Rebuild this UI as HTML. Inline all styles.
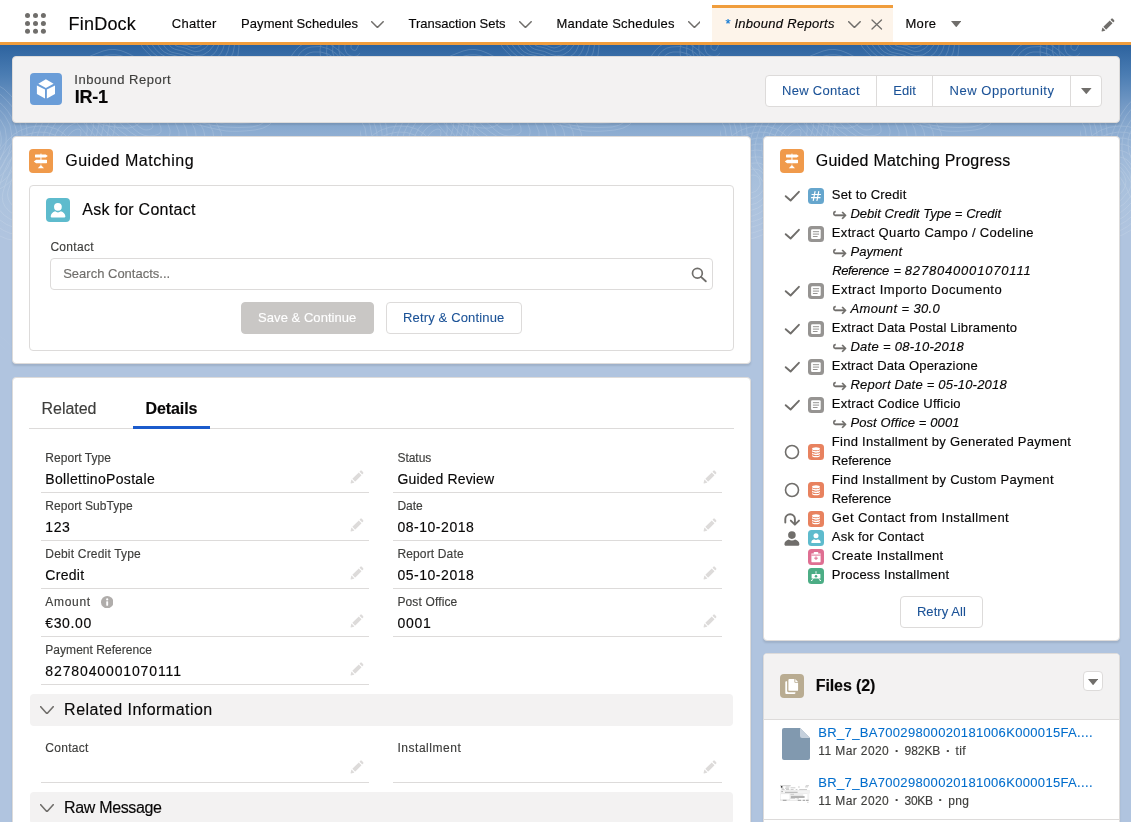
<!DOCTYPE html>
<html lang="en">
<head>
<meta charset="utf-8">
<title>IR-1 | Inbound Report | Salesforce</title>
<style>

html,body{margin:0;padding:0}
body{width:1131px;height:822px;overflow:hidden;position:relative;background:#b0c4df;
 font-family:"Liberation Sans",sans-serif;font-size:13px;color:#080707}
#root{position:absolute;left:0;top:0;width:1131px;height:822px;will-change:transform}
.t{position:absolute;white-space:nowrap;line-height:1;-webkit-text-stroke:.15px}
.ns{-webkit-text-stroke:.08px}
.abs,.card,svg.i,.btn,.ico,.ln{position:absolute}
#band{left:0;top:45px;width:1131px;height:200px;background:linear-gradient(to bottom,#2d639f 0px,#4b7db3 30px,#7399c5 60px,#87a8ce 80px,#93b1d4 95px,#a0bad9 115px,#a8c0dc 138px,#adc3de 162px,#b0c4df 190px)}
#nav{left:0;top:0;width:1131px;height:42px;background:#fff;border-bottom:3px solid #f09d3c}
#tab{left:712px;top:5px;width:181px;height:37px;background:#fdf4ea;border-top:3px solid #f09d3c;box-sizing:border-box}
.card{background:#fff;border:1px solid #dddbda;border-radius:4px;box-shadow:0 2px 2px 0 rgba(0,0,0,.10);box-sizing:border-box}
.btn{box-sizing:border-box;border:1px solid #dddbda;border-radius:4px;background:#fff}
.ico{border-radius:4px}
.ico svg{display:block}
.ln{height:1px;background:#dddbda}
.sec{position:absolute;left:30px;width:703px;height:32px;background:#f3f2f2;border-radius:4px}

</style>
</head>
<body>
<div id="root">
<div class="abs" id="band"></div>
<svg class="i" style="left:0;top:45px" width="1131" height="330" viewBox="0 0 1131 330"><defs><pattern id="topo" width="360" height="250" patternUnits="userSpaceOnUse"><g fill="none" stroke="#fff" stroke-width=".8"><path d="M-19 102Q-21 103 -23 102Q-25 101 -25 99Q-26 97 -25 96Q-24 94 -24 93Q-23 91 -21 90Q-19 89 -17 90Q-15 92 -15 94Q-15 95 -15 97Q-15 99 -16 100Q-17 101 -19 102Z"/><path d="M-18 108Q-22 109 -26 108Q-30 106 -31 102Q-31 98 -30 95Q-29 93 -27 89Q-26 86 -22 84Q-18 82 -15 85Q-11 87 -10 91Q-9 94 -10 98Q-10 101 -12 104Q-14 106 -18 108Z"/><path d="M-16 113Q-22 115 -29 113Q-35 111 -36 105Q-37 99 -35 95Q-33 91 -31 86Q-29 82 -23 78Q-17 75 -12 79Q-7 83 -5 88Q-4 94 -5 98Q-5 103 -8 107Q-11 112 -16 113Z"/><path d="M-15 119Q-23 121 -31 119Q-40 116 -41 108Q-42 100 -40 94Q-38 88 -35 83Q-32 77 -24 72Q-16 67 -9 73Q-2 79 -0 86Q2 93 1 99Q-1 105 -4 111Q-7 117 -15 119Z"/><path d="M-14 125Q-24 127 -34 124Q-45 121 -46 111Q-47 101 -45 94Q-43 86 -39 79Q-35 72 -25 66Q-16 60 -7 67Q2 75 5 83Q7 92 6 99Q4 107 -0 115Q-4 122 -14 125Z"/><path d="M-13 130Q-24 133 -37 130Q-50 127 -51 114Q-53 102 -50 93Q-47 84 -42 76Q-37 68 -26 60Q-15 52 -4 61Q6 70 10 80Q13 91 11 100Q9 109 4 118Q-1 128 -13 130Z"/><path d="M-11 136Q-25 139 -40 135Q-55 132 -57 117Q-58 103 -55 93Q-52 82 -46 73Q-40 63 -27 54Q-14 45 -2 56Q10 66 14 78Q19 90 16 100Q13 111 8 122Q2 133 -11 136Z"/><path d="M-10 142Q-26 145 -43 141Q-60 137 -62 120Q-64 104 -60 92Q-56 80 -50 69Q-43 58 -28 48Q-13 38 1 50Q15 62 19 75Q24 89 21 101Q18 113 12 126Q5 138 -10 142Z"/><path d="M-9 147Q-27 151 -46 146Q-65 141 -67 123Q-69 105 -65 92Q-60 79 -53 66Q-46 53 -29 42Q-12 31 4 44Q19 57 24 72Q29 88 26 102Q23 115 16 129Q8 143 -9 147Z"/><path d="M40 137Q41 140 39 142Q38 144 36 146Q34 147 31 148Q28 149 26 146Q24 144 24 141Q25 138 26 136Q27 134 28 132Q30 130 33 130Q36 130 38 132Q40 134 40 137Z"/><path d="M46 136Q46 140 44 144Q42 147 39 150Q35 153 30 154Q25 155 21 151Q18 148 19 143Q20 138 21 134Q23 131 26 127Q29 124 34 124Q39 124 42 127Q45 131 46 136Z"/><path d="M51 135Q52 141 49 146Q45 150 41 155Q37 159 30 160Q23 161 17 156Q12 151 13 144Q15 137 17 133Q19 128 23 123Q27 118 35 118Q42 117 46 123Q51 128 51 135Z"/><path d="M57 134Q58 142 53 148Q49 154 44 159Q38 164 29 166Q20 167 13 161Q6 154 8 146Q11 137 13 131Q15 124 21 118Q26 112 35 112Q45 111 50 118Q56 126 57 134Z"/><path d="M62 132Q64 142 58 149Q53 157 46 163Q39 170 28 172Q17 173 9 166Q-0 158 3 147Q6 137 9 129Q11 121 18 114Q25 106 36 105Q47 105 54 114Q61 123 62 132Z"/><path d="M68 131Q69 143 63 151Q56 160 48 168Q41 176 28 177Q15 179 4 170Q-6 161 -3 149Q1 136 4 127Q7 117 15 109Q23 101 37 99Q50 98 58 109Q66 120 68 131Z"/><path d="M73 130Q75 143 67 153Q60 163 51 172Q42 181 27 183Q12 185 -0 175Q-12 165 -8 150Q-4 136 -0 125Q4 114 13 104Q22 95 38 93Q53 92 62 104Q71 117 73 130Z"/><path d="M78 129Q80 144 72 155Q64 166 53 177Q43 187 26 189Q9 192 -4 180Q-18 168 -13 152Q-9 135 -4 123Q-0 111 10 100Q21 89 38 87Q56 86 66 100Q76 114 78 129Z"/><path d="M84 127Q86 144 77 157Q68 170 56 181Q44 192 25 195Q6 198 -9 185Q-23 171 -19 153Q-14 135 -9 121Q-4 108 8 95Q19 82 39 81Q58 80 70 95Q82 110 84 127Z"/><path d="M70 103Q68 101 68 99Q67 97 67 95Q66 92 69 90Q71 87 73 86Q76 84 78 84Q81 84 81 87Q81 90 80 92Q79 94 78 98Q77 101 74 103Q71 104 70 103Z"/><path d="M67 111Q64 107 62 104Q61 100 60 96Q60 91 64 86Q68 81 73 79Q78 77 82 76Q87 76 87 81Q88 86 86 91Q84 95 82 101Q80 107 75 111Q69 114 67 111Z"/><path d="M63 119Q59 113 57 108Q54 104 54 97Q54 90 59 83Q65 75 72 72Q79 69 86 68Q94 68 94 75Q94 83 91 90Q89 96 86 105Q83 113 75 119Q67 125 63 119Z"/><path d="M60 127Q55 118 51 113Q48 107 48 98Q48 89 55 79Q62 69 71 66Q81 62 91 61Q100 59 100 69Q99 80 97 89Q94 97 90 108Q86 118 75 127Q65 135 60 127Z"/><path d="M57 135Q51 123 46 117Q41 111 42 99Q42 88 51 75Q59 63 71 59Q82 55 95 53Q107 50 106 63Q105 77 102 88Q100 98 94 111Q89 124 76 135Q62 146 57 135Z"/><path d="M54 143Q47 129 40 122Q34 115 35 101Q37 87 46 71Q56 56 70 52Q84 49 99 45Q114 41 112 58Q111 74 108 87Q106 99 98 114Q91 129 76 143Q60 157 54 143Z"/><path d="M50 151Q43 134 35 126Q27 118 29 102Q31 86 42 68Q53 50 69 46Q85 42 103 37Q121 32 119 52Q116 71 114 86Q111 100 102 118Q94 135 76 151Q58 167 50 151Z"/><path d="M108 46Q107 45 107 44Q108 42 109 41Q110 40 111 40Q112 40 113 41Q115 41 115 42Q116 43 116 44Q116 46 115 47Q114 47 113 48Q111 48 110 47Q109 47 108 46Z"/><path d="M104 48Q101 47 102 43Q102 40 104 38Q107 36 110 36Q112 36 115 36Q118 36 120 39Q121 42 121 45Q122 48 119 50Q117 52 114 53Q111 53 109 52Q106 50 104 48Z"/><path d="M99 51Q95 48 96 43Q97 38 100 34Q104 31 108 31Q113 31 117 31Q122 32 124 36Q126 41 127 46Q127 51 123 54Q120 57 115 58Q111 59 107 56Q103 54 99 51Z"/><path d="M94 54Q89 49 90 42Q91 35 96 31Q101 27 107 26Q113 25 119 27Q126 28 129 33Q132 39 132 46Q133 53 128 58Q123 62 116 63Q110 64 105 61Q100 58 94 54Z"/><path d="M90 56Q84 51 84 42Q85 33 92 27Q99 22 106 21Q114 20 121 22Q129 24 134 31Q138 38 138 46Q138 55 132 61Q126 68 118 68Q110 68 103 65Q96 62 90 56Z"/><path d="M85 59Q78 52 78 41Q78 30 87 24Q96 18 105 16Q114 14 123 17Q132 20 138 28Q144 36 143 47Q143 57 136 65Q129 73 119 73Q109 73 101 70Q93 66 85 59Z"/><path d="M81 62Q73 53 72 40Q72 27 83 21Q94 14 104 11Q115 8 125 12Q136 16 143 26Q150 35 149 47Q147 59 140 69Q133 79 121 78Q109 77 99 74Q89 71 81 62Z"/><path d="M76 65Q68 54 67 39Q66 24 79 17Q91 10 103 6Q115 2 127 8Q139 13 148 23Q157 33 154 47Q152 61 144 73Q136 85 122 83Q109 82 97 78Q85 75 76 65Z"/><path d="M153 81Q153 83 151 84Q149 85 146 85Q143 85 141 83Q139 82 137 80Q134 78 134 76Q133 74 135 72Q136 71 140 72Q143 73 145 74Q148 74 150 76Q152 78 153 81Z"/><path d="M161 83Q162 87 159 89Q155 91 149 91Q144 91 139 88Q135 85 131 81Q126 78 125 74Q123 69 127 67Q130 64 136 66Q142 68 147 69Q152 71 156 75Q160 78 161 83Z"/><path d="M170 85Q171 91 166 94Q161 98 152 97Q144 97 138 92Q131 88 125 83Q118 78 116 71Q113 65 119 61Q125 58 133 60Q142 62 149 65Q157 68 163 73Q169 78 170 85Z"/><path d="M179 87Q180 95 173 100Q167 105 156 104Q145 102 136 97Q127 91 119 85Q111 78 107 69Q103 60 111 56Q119 51 130 54Q142 57 151 61Q161 65 169 71Q177 78 179 87Z"/><path d="M187 89Q189 99 181 105Q173 111 159 110Q145 108 134 101Q122 94 113 86Q104 78 98 67Q93 56 103 50Q113 45 127 48Q141 51 153 56Q165 61 175 70Q186 78 187 89Z"/><path d="M196 90Q197 103 188 111Q179 119 162 116Q145 113 132 106Q118 98 107 88Q96 78 89 64Q82 51 95 45Q108 39 124 42Q141 45 155 52Q169 58 182 68Q195 78 196 90Z"/><path d="M205 92Q205 106 195 116Q185 126 166 122Q146 119 129 110Q113 101 101 90Q89 78 81 62Q72 46 87 39Q103 33 122 36Q141 40 156 47Q172 55 188 67Q204 78 205 92Z"/><path d="M214 94Q214 110 203 121Q192 133 169 128Q146 124 127 114Q109 105 96 92Q82 78 72 60Q61 41 79 34Q97 27 119 30Q140 34 158 43Q176 52 195 65Q214 78 214 94Z"/><path d="M222 96Q222 114 210 127Q198 140 172 135Q146 129 125 119Q104 108 90 93Q75 78 63 57Q51 37 71 29Q92 21 116 24Q140 28 160 39Q180 49 201 64Q223 79 222 96Z"/><path d="M195 -1Q193 -0 191 -2Q189 -3 186 -3Q184 -3 183 -6Q181 -8 183 -10Q184 -13 186 -13Q189 -13 191 -14Q194 -14 195 -12Q197 -11 198 -9Q200 -7 199 -5Q198 -2 195 -1Z"/><path d="M198 2Q194 4 190 2Q187 -0 183 -0Q180 -1 178 -4Q176 -8 178 -12Q179 -16 184 -16Q188 -17 192 -17Q195 -17 198 -15Q200 -13 203 -10Q206 -7 204 -3Q202 1 198 2Z"/><path d="M200 6Q195 8 190 5Q186 3 181 2Q175 2 173 -3Q170 -8 173 -14Q175 -19 181 -20Q187 -21 192 -21Q197 -21 200 -18Q204 -15 208 -11Q211 -7 209 -1Q206 4 200 6Z"/><path d="M203 10Q196 12 190 9Q185 6 178 5Q171 4 168 -2Q165 -8 168 -15Q171 -22 179 -23Q186 -24 193 -25Q199 -25 203 -21Q208 -17 212 -12Q217 -6 214 0Q210 7 203 10Z"/><path d="M206 13Q197 16 190 13Q183 9 175 8Q167 7 163 -1Q159 -9 163 -17Q167 -25 176 -27Q185 -28 193 -28Q200 -28 206 -24Q212 -20 217 -13Q222 -6 218 2Q215 11 206 13Z"/><path d="M209 17Q198 20 190 16Q182 12 173 10Q163 9 158 -0Q152 -9 158 -18Q163 -28 174 -30Q184 -32 193 -32Q202 -32 209 -27Q216 -22 221 -14Q227 -6 223 4Q219 14 209 17Z"/><path d="M211 21Q199 24 189 20Q180 16 170 13Q160 11 153 1Q146 -9 153 -20Q160 -31 171 -34Q183 -37 193 -36Q203 -35 212 -30Q220 -25 226 -15Q232 -6 228 6Q224 18 211 21Z"/><path d="M214 24Q200 27 189 23Q179 19 168 16Q156 13 148 2Q139 -9 148 -21Q156 -33 169 -37Q182 -41 193 -39Q205 -38 214 -33Q224 -27 231 -17Q237 -6 233 8Q229 21 214 24Z"/><path d="M217 28Q200 30 189 27Q177 23 165 19Q153 15 143 3Q133 -10 143 -23Q153 -36 167 -41Q181 -46 193 -43Q206 -41 217 -35Q229 -30 235 -18Q241 -6 238 10Q234 25 217 28Z"/><path d="M236 51Q238 54 237 57Q236 60 232 60Q229 61 226 61Q223 60 220 59Q217 59 215 56Q213 53 215 50Q217 48 220 46Q223 45 226 46Q229 46 232 47Q234 49 236 51Z"/><path d="M242 50Q244 54 243 59Q241 63 236 64Q230 65 226 64Q222 64 217 62Q213 61 210 57Q207 53 210 49Q213 45 217 43Q222 41 226 42Q231 43 235 44Q239 46 242 50Z"/><path d="M247 49Q251 54 249 60Q247 67 239 67Q231 68 226 68Q220 67 214 65Q208 64 204 58Q200 53 204 47Q208 42 214 39Q220 37 226 38Q232 39 238 41Q243 44 247 49Z"/><path d="M252 48Q257 54 254 62Q252 70 242 71Q233 72 226 71Q219 71 211 68Q204 66 199 59Q194 52 199 46Q204 39 211 36Q219 32 226 34Q234 36 241 38Q248 41 252 48Z"/><path d="M257 47Q263 55 260 64Q257 73 245 74Q234 76 226 75Q217 74 208 72Q199 69 193 60Q187 52 193 44Q199 36 208 32Q217 28 226 30Q235 32 243 35Q252 39 257 47Z"/><path d="M263 46Q269 55 266 66Q262 77 249 78Q235 79 225 79Q216 78 205 75Q194 71 188 62Q181 52 188 43Q195 33 205 29Q216 24 226 26Q237 29 246 32Q256 36 263 46Z"/><path d="M268 45Q276 55 271 67Q267 80 252 82Q237 83 225 82Q214 81 202 78Q190 74 182 63Q175 52 182 41Q190 30 202 25Q214 20 226 22Q238 25 249 29Q260 34 268 45Z"/><path d="M273 43Q282 55 277 69Q272 83 255 85Q238 87 226 86Q213 84 199 80Q185 77 177 64Q169 52 177 39Q185 27 199 22Q213 16 226 19Q240 21 252 26Q264 32 273 43Z"/><path d="M272 190Q270 190 269 189Q268 188 268 187Q268 186 267 184Q267 182 268 181Q270 180 271 180Q272 181 273 181Q274 182 275 183Q276 184 276 186Q275 188 274 189Q273 190 272 190Z"/><path d="M272 196Q269 196 267 194Q265 192 264 189Q264 186 263 182Q262 178 265 176Q268 174 271 175Q274 175 275 177Q277 179 279 181Q282 184 280 187Q279 190 277 193Q275 196 272 196Z"/><path d="M272 202Q268 201 264 198Q261 196 261 191Q260 187 258 181Q257 175 261 172Q266 169 271 170Q275 170 278 173Q280 176 284 179Q287 183 285 188Q283 193 280 198Q277 202 272 202Z"/><path d="M272 207Q266 206 262 203Q258 199 257 193Q256 187 254 179Q252 171 258 167Q265 164 270 164Q276 165 280 169Q283 173 288 177Q293 182 289 189Q286 196 282 202Q278 208 272 207Z"/><path d="M273 213Q265 211 260 207Q254 203 253 195Q252 188 249 178Q247 168 255 163Q263 158 270 159Q277 160 282 165Q286 169 292 175Q298 181 294 190Q290 199 285 206Q280 214 273 213Z"/><path d="M273 218Q264 217 257 212Q251 206 249 197Q248 189 245 176Q242 164 252 158Q261 152 270 154Q278 155 284 161Q290 166 296 173Q303 180 299 191Q294 201 288 211Q282 220 273 218Z"/><path d="M273 224Q262 223 255 216Q248 209 246 199Q243 189 240 175Q237 161 248 154Q259 146 269 148Q279 151 286 157Q293 162 300 171Q308 180 303 192Q299 204 291 215Q284 225 273 224Z"/><path d="M273 230Q261 229 253 221Q246 212 242 201Q238 190 236 174Q233 158 245 149Q257 140 269 143Q280 147 289 153Q297 159 305 169Q312 179 308 193Q303 208 294 219Q285 230 273 230Z"/><path d="M273 235Q259 236 251 225Q243 215 238 203Q233 191 231 173Q229 155 242 144Q255 133 268 138Q281 143 291 149Q301 154 309 166Q317 178 312 195Q308 211 297 223Q287 235 273 235Z"/><path d="M325 38Q323 38 322 38Q321 37 319 36Q317 36 317 33Q317 31 318 29Q319 27 321 27Q323 27 324 28Q326 28 326 30Q327 31 329 33Q330 35 328 37Q327 38 325 38Z"/><path d="M327 43Q324 43 321 42Q319 41 315 39Q312 38 312 34Q312 30 314 26Q316 23 319 22Q322 22 325 23Q328 24 330 27Q331 29 334 33Q336 37 333 40Q330 43 327 43Z"/><path d="M329 48Q324 48 320 46Q316 45 311 42Q306 40 307 34Q307 28 310 23Q312 18 317 17Q322 17 326 18Q330 20 333 24Q335 28 339 33Q343 39 338 44Q334 48 329 48Z"/><path d="M331 53Q324 53 319 50Q314 48 308 46Q301 43 302 35Q302 27 305 20Q308 13 315 12Q322 11 327 14Q332 16 336 21Q339 26 344 33Q349 41 343 47Q337 53 331 53Z"/><path d="M333 57Q324 57 318 55Q312 52 304 49Q296 45 296 35Q297 25 301 16Q305 8 313 7Q321 6 328 9Q335 12 339 18Q343 24 349 33Q355 43 348 50Q341 58 333 57Z"/><path d="M335 62Q325 61 317 59Q310 56 300 52Q291 47 291 35Q292 23 297 13Q302 3 311 2Q321 -0 329 4Q337 8 342 15Q348 22 354 33Q361 45 353 54Q344 63 335 62Z"/><path d="M337 67Q325 65 316 63Q307 61 297 55Q286 49 286 35Q286 21 292 10Q299 -1 310 -4Q321 -6 330 -1Q339 5 346 12Q352 20 360 33Q367 47 358 58Q348 69 337 67Z"/><path d="M353 5Q352 5 351 3Q351 2 351 1Q351 -0 352 -1Q353 -1 354 -2Q355 -3 357 -3Q358 -3 359 -1Q359 0 358 1Q358 2 357 3Q357 4 356 5Q355 6 353 5Z"/><path d="M351 11Q347 10 346 7Q344 4 345 0Q345 -3 348 -4Q351 -5 353 -7Q355 -9 359 -9Q363 -9 365 -5Q366 -1 364 1Q362 4 361 7Q360 9 357 11Q354 12 351 11Z"/><path d="M349 17Q343 16 340 10Q338 5 339 0Q340 -5 344 -7Q348 -9 352 -12Q356 -16 362 -15Q368 -15 371 -9Q373 -3 369 1Q366 6 365 10Q363 14 359 17Q354 19 349 17Z"/><path d="M346 23Q339 21 335 14Q331 7 333 -0Q334 -7 340 -10Q346 -13 351 -17Q356 -22 365 -22Q374 -21 377 -13Q379 -5 375 1Q370 7 368 13Q366 19 360 22Q354 26 346 23Z"/><path d="M344 30Q334 26 329 17Q325 8 327 -1Q329 -10 336 -13Q343 -17 350 -23Q356 -28 368 -28Q379 -28 382 -17Q386 -6 380 2Q375 9 372 16Q369 23 362 28Q354 33 344 30Z"/><path d="M342 36Q330 31 324 20Q318 10 321 -1Q324 -12 332 -17Q340 -21 348 -28Q356 -34 370 -34Q384 -34 388 -21Q392 -8 386 2Q379 11 376 19Q372 28 363 34Q353 40 342 36Z"/></g></pattern><linearGradient id="fade" x1="0" y1="0" x2="0" y2="1"><stop offset="0" stop-color="#fff" stop-opacity=".2"/><stop offset=".55" stop-color="#fff" stop-opacity=".16"/><stop offset="1" stop-color="#fff" stop-opacity="0"/></linearGradient><mask id="fm"><rect width="1131" height="330" fill="url(#fade)"/></mask></defs><rect width="1131" height="330" fill="url(#topo)" mask="url(#fm)"/></svg>
<div class="abs" id="nav"></div>
<div class="abs" id="tab"></div>
<svg class="i" style="left:25px;top:13px" width="21" height="21" viewBox="0 0 21 21"><g fill="#706e6b"><circle cx="2.5" cy="2.5" r="2.500"/><circle cx="10.5" cy="2.5" r="2.500"/><circle cx="18.4" cy="2.5" r="2.500"/><circle cx="2.5" cy="10.4" r="2.500"/><circle cx="10.5" cy="10.4" r="2.500"/><circle cx="18.4" cy="10.4" r="2.500"/><circle cx="2.5" cy="18.3" r="2.500"/><circle cx="10.5" cy="18.3" r="2.500"/><circle cx="18.4" cy="18.3" r="2.500"/></g></svg>
<span class="t" style="left:68.61px;top:15.30px;font-size:18px;letter-spacing:0.197px;">FinDock</span>
<span class="t" style="left:171.71px;top:17.11px;font-size:13px;letter-spacing:0.327px;">Chatter</span>
<span class="t" style="left:241.00px;top:17.11px;font-size:13px;letter-spacing:0.086px;">Payment Schedules</span>
<svg class="i" style="left:371px;top:21.1px" width="12.9" height="7.2" viewBox="0 0 12.9 7.2"><path d="M.7 .7L6.45 6.5L12.2 .7" fill="none" stroke="#706e6b" stroke-width="1.5" stroke-linecap="round" stroke-linejoin="round"/></svg>
<span class="t" style="left:408.50px;top:17.11px;font-size:13px;">Transaction Sets</span>
<svg class="i" style="left:518.8px;top:21.1px" width="12.9" height="7.2" viewBox="0 0 12.9 7.2"><path d="M.7 .7L6.45 6.5L12.2 .7" fill="none" stroke="#706e6b" stroke-width="1.5" stroke-linecap="round" stroke-linejoin="round"/></svg>
<span class="t" style="left:556.50px;top:17.11px;font-size:13px;letter-spacing:0.192px;">Mandate Schedules</span>
<svg class="i" style="left:687.6px;top:21.1px" width="12.9" height="7.2" viewBox="0 0 12.9 7.2"><path d="M.7 .7L6.45 6.5L12.2 .7" fill="none" stroke="#706e6b" stroke-width="1.5" stroke-linecap="round" stroke-linejoin="round"/></svg>
<span class="t" style="left:725.41px;top:16.50px;font-size:13px;color:#0070d2;">*</span>
<span class="t" style="left:734.41px;top:17.11px;font-size:13px;font-style:italic;letter-spacing:0.277px;">Inbound Reports</span>
<svg class="i" style="left:847.9px;top:21.1px" width="12.9" height="7.2" viewBox="0 0 12.9 7.2"><path d="M.7 .7L6.45 6.5L12.2 .7" fill="none" stroke="#706e6b" stroke-width="1.5" stroke-linecap="round" stroke-linejoin="round"/></svg>
<svg class="i" style="left:871px;top:18.800px" width="11.500" height="11" viewBox="0 0 11.500 11"><path d="M1 1L10.500 10M10.500 1L1 10" stroke="#706e6b" stroke-width="1.300" stroke-linecap="round"/></svg>
<span class="t" style="left:905.50px;top:17.11px;font-size:13px;letter-spacing:0.292px;">More</span>
<svg class="i" style="left:950.5px;top:20.8px" width="10.5" height="6.3" viewBox="0 0 10.5 6.3"><path d="M0 0H10.5L5.25 6.3Z" fill="#706e6b"/></svg>
<svg class="i" style="left:1101px;top:18.2px" width="14" height="14" viewBox="0 0 52 52"><path fill="#706e6b" d="M9.5 33.4l8.9 8.9c.4.4 1 .4 1.4 0L42 20c.4-.4.4-1 0-1.4l-8.8-8.8c-.4-.4-1-.4-1.4 0L9.5 32c-.4.4-.4 1 0 1.400zM36.100 5.700c-.4.4-.4 1 0 1.400l8.800 8.800c.4.4 1 .4 1.400 0l2.500-2.500c1.600-1.500 1.600-3.900 0-5.500l-4.700-4.700c-1.600-1.600-4.100-1.600-5.700 0l-2.300 2.500zM2.100 48.200c-.2 1 .7 1.900 1.700 1.700l10.900-2.600c.4-.1.700-.3.900-.5l.2-.2c.2-.2.300-.9-.1-1.300l-9-9c-.4-.4-1.100-.3-1.300-.1l-.2.200c-.3.300-.4.600-.5.900L2.100 48.200z"/></svg>
<div class="card" style="left:12px;top:56px;width:1108px;height:67px;background:#f3f2f2"></div>
<div class="ico" style="left:30px;top:73px;width:32px;height:32px;background:#6a9dd8"><svg width="32" height="32" viewBox="0 0 32 32"><g fill="#fff"><path d="M15.900 6.200L23.600 10.700 15.900 15.100 8.300 10.700z"/><path d="M6.900 12.400L15 16.500V25.400L6.900 20.900z"/><path d="M25 12.400L16.900 16.500V25.400L25 20.900z"/></g></svg></div>
<span class="t" style="left:74.30px;top:72.91px;font-size:13px;color:#3e3e3c;letter-spacing:0.521px;">Inbound Report</span>
<span class="t" style="left:74.80px;top:87.80px;font-size:18px;font-weight:700;letter-spacing:-0.305px;">IR-1</span>
<div class="btn" style="left:765px;top:75px;width:337px;height:32px"></div>
<div class="abs" style="left:876px;top:76px;width:1px;height:30px;background:#dddbda"></div>
<div class="abs" style="left:932px;top:76px;width:1px;height:30px;background:#dddbda"></div>
<div class="abs" style="left:1070px;top:76px;width:1px;height:30px;background:#dddbda"></div>
<span class="t ns" style="left:782.00px;top:83.80px;font-size:13px;color:#1b5297;letter-spacing:0.308px;">New Contact</span>
<span class="t ns" style="left:893.21px;top:83.80px;font-size:13px;color:#1b5297;letter-spacing:0.065px;">Edit</span>
<span class="t ns" style="left:949.50px;top:83.80px;font-size:13px;color:#1b5297;letter-spacing:0.548px;">New Opportunity</span>
<svg class="i" style="left:1081px;top:87.6px" width="10.6" height="6.2" viewBox="0 0 10.6 6.2"><path d="M0 0H10.6L5.3 6.2Z" fill="#706e6b"/></svg>
<div class="card" style="left:12px;top:136px;width:739px;height:228px"></div>
<div class="ico" style="left:29px;top:149px;width:24px;height:24px;background:#f09a4b"><svg width="24" height="24" viewBox="0 0 24 24"><g fill="#fff"><path d="M6.500 5.600h10.300l2 1.500-2 1.500H6.500c-.3 0-.5-.2-.5-.5v-2c0-.3.200-.5.500-.5z"/><path d="M17.500 10.700H7.100l-2.300 1.800 2.300 1.800h10.400c.3 0 .5-.2.5-.5v-2.600c0-.3-.2-.5-.5-.5z"/><rect x="11.400" y="4.600" width="1.100" height="7" opacity=".9"/><rect x="11.400" y="14.300" width="1.100" height="2" opacity=".35"/><path d="M11.900 16l3.100 3.300H8.800z"/></g></svg></div>
<span class="t" style="left:65.21px;top:153.21px;font-size:16px;letter-spacing:0.531px;">Guided Matching</span>
<div class="abs" style="left:29px;top:185px;width:705px;height:166px;border:1px solid #dddbda;border-radius:4px;box-sizing:border-box"></div>
<div class="ico" style="left:46px;top:198px;width:24px;height:24px;background:#5ebbcd"><svg width="24" height="24" viewBox="0 0 24 24"><g fill="#fff"><circle cx="11.900" cy="8.800" r="3.900"/><path d="M4.700 18.600c0-2.700 2-4.600 4.400-5.300.8.700 1.800 1.100 2.900 1.100s2.100-.4 2.900-1.100c2.400.7 4.500 2.600 4.500 5.300 0 .5-.3.800-.8.800H5.500c-.5 0-.8-.3-.8-.8z"/></g></svg></div>
<span class="t" style="left:82.21px;top:202.00px;font-size:16px;letter-spacing:0.273px;">Ask for Contact</span>
<span class="t" style="left:50.41px;top:241.00px;font-size:12px;color:#3e3e3c;letter-spacing:0.290px;">Contact</span>
<div class="btn" style="left:50px;top:258px;width:663px;height:32px"></div>
<span class="t" style="left:63.21px;top:267.00px;font-size:13px;color:#706e6b;">Search Contacts...</span>
<svg class="i" style="left:690px;top:266px" width="18" height="18" viewBox="0 0 18 18"><circle cx="7.400" cy="7.300" r="4.900" fill="none" stroke="#706e6b" stroke-width="1.700"/><path d="M11 10.900L15.800 15.300" stroke="#706e6b" stroke-width="1.900" stroke-linecap="round"/></svg>
<div class="btn" style="left:241px;top:302px;width:133px;height:32px;background:#c9c7c5;border-color:#c9c7c5"></div>
<span class="t" style="left:258.11px;top:311.11px;font-size:13px;color:#fff;letter-spacing:0.044px;">Save &amp; Continue</span>
<div class="btn" style="left:386px;top:302px;width:136px;height:32px"></div>
<span class="t ns" style="left:403.00px;top:311.11px;font-size:13px;color:#1b5297;letter-spacing:0.153px;">Retry &amp; Continue</span>
<div class="card" style="left:12px;top:377px;width:739px;height:470px"></div>
<div class="ln" style="left:29px;top:428px;width:705px"></div>
<div class="abs" style="left:133px;top:426px;width:77px;height:3px;background:#1b5bcc"></div>
<span class="t" style="left:41.61px;top:401.21px;font-size:16px;color:#3e3e3c;letter-spacing:-0.059px;">Related</span>
<span class="t" style="left:145.41px;top:401.21px;font-size:16px;font-weight:700;letter-spacing:-0.078px;">Details</span>
<span class="t" style="left:45.30px;top:452.00px;font-size:12px;color:#3e3e3c;letter-spacing:0.054px;">Report Type</span>
<span class="t" style="left:45.30px;top:472.00px;font-size:14px;letter-spacing:0.319px;">BollettinoPostale</span>
<div class="ln" style="left:41px;top:492px;width:328px"></div>
<svg class="i" style="left:350px;top:470.2px" width="14" height="14" viewBox="0 0 52 52"><path fill="#dddbda" d="M9.5 33.4l8.9 8.9c.4.4 1 .4 1.4 0L42 20c.4-.4.4-1 0-1.4l-8.8-8.8c-.4-.4-1-.4-1.4 0L9.5 32c-.4.4-.4 1 0 1.400zM36.100 5.700c-.4.4-.4 1 0 1.400l8.800 8.800c.4.4 1 .4 1.400 0l2.500-2.500c1.600-1.500 1.600-3.900 0-5.500l-4.700-4.700c-1.600-1.600-4.100-1.600-5.700 0l-2.300 2.500zM2.100 48.200c-.2 1 .7 1.900 1.700 1.700l10.900-2.600c.4-.1.700-.3.900-.5l.2-.2c.2-.2.300-.9-.1-1.300l-9-9c-.4-.4-1.100-.3-1.300-.1l-.2.200c-.3.300-.4.600-.5.900L2.100 48.200z"/></svg>
<span class="t" style="left:45.30px;top:500.00px;font-size:12px;color:#3e3e3c;letter-spacing:0.045px;">Report SubType</span>
<span class="t" style="left:45.30px;top:520.00px;font-size:14px;letter-spacing:0.570px;">123</span>
<div class="ln" style="left:41px;top:540px;width:328px"></div>
<svg class="i" style="left:350px;top:518.2px" width="14" height="14" viewBox="0 0 52 52"><path fill="#dddbda" d="M9.5 33.4l8.9 8.9c.4.4 1 .4 1.4 0L42 20c.4-.4.4-1 0-1.4l-8.8-8.8c-.4-.4-1-.4-1.4 0L9.5 32c-.4.4-.4 1 0 1.400zM36.100 5.700c-.4.4-.4 1 0 1.400l8.800 8.800c.4.4 1 .4 1.400 0l2.500-2.500c1.600-1.500 1.600-3.900 0-5.500l-4.700-4.700c-1.600-1.600-4.100-1.600-5.700 0l-2.300 2.500zM2.100 48.200c-.2 1 .7 1.900 1.700 1.700l10.900-2.600c.4-.1.700-.3.900-.5l.2-.2c.2-.2.300-.9-.1-1.300l-9-9c-.4-.4-1.100-.3-1.300-.1l-.2.200c-.3.300-.4.600-.5.900L2.100 48.200z"/></svg>
<span class="t" style="left:45.30px;top:548.00px;font-size:12px;color:#3e3e3c;letter-spacing:0.188px;">Debit Credit Type</span>
<span class="t" style="left:45.30px;top:568.00px;font-size:14px;letter-spacing:0.308px;">Credit</span>
<div class="ln" style="left:41px;top:588px;width:328px"></div>
<svg class="i" style="left:350px;top:566.2px" width="14" height="14" viewBox="0 0 52 52"><path fill="#dddbda" d="M9.5 33.4l8.9 8.9c.4.4 1 .4 1.4 0L42 20c.4-.4.4-1 0-1.4l-8.8-8.8c-.4-.4-1-.4-1.4 0L9.5 32c-.4.4-.4 1 0 1.400zM36.100 5.700c-.4.4-.4 1 0 1.400l8.800 8.800c.4.4 1 .4 1.400 0l2.500-2.500c1.600-1.500 1.600-3.900 0-5.500l-4.700-4.700c-1.600-1.600-4.100-1.600-5.700 0l-2.300 2.500zM2.100 48.200c-.2 1 .7 1.900 1.700 1.700l10.900-2.600c.4-.1.700-.3.900-.5l.2-.2c.2-.2.300-.9-.1-1.300l-9-9c-.4-.4-1.100-.3-1.300-.1l-.2.200c-.3.300-.4.600-.5.900L2.100 48.200z"/></svg>
<span class="t" style="left:45.30px;top:596.00px;font-size:12px;color:#3e3e3c;letter-spacing:0.708px;">Amount</span>
<span class="t" style="left:45.30px;top:616.00px;font-size:14px;letter-spacing:0.614px;">€30.00</span>
<div class="ln" style="left:41px;top:636px;width:328px"></div>
<svg class="i" style="left:350px;top:614.2px" width="14" height="14" viewBox="0 0 52 52"><path fill="#dddbda" d="M9.5 33.4l8.9 8.9c.4.4 1 .4 1.4 0L42 20c.4-.4.4-1 0-1.4l-8.8-8.8c-.4-.4-1-.4-1.4 0L9.5 32c-.4.4-.4 1 0 1.400zM36.100 5.700c-.4.4-.4 1 0 1.400l8.800 8.800c.4.4 1 .4 1.400 0l2.500-2.500c1.600-1.500 1.600-3.900 0-5.500l-4.700-4.700c-1.600-1.600-4.100-1.600-5.700 0l-2.300 2.500zM2.100 48.200c-.2 1 .7 1.900 1.700 1.700l10.900-2.600c.4-.1.700-.3.900-.5l.2-.2c.2-.2.300-.9-.1-1.300l-9-9c-.4-.4-1.100-.3-1.300-.1l-.2.200c-.3.300-.4.600-.5.900L2.100 48.200z"/></svg>
<span class="t" style="left:45.30px;top:644.00px;font-size:12px;color:#3e3e3c;letter-spacing:0.040px;">Payment Reference</span>
<span class="t" style="left:45.30px;top:664.00px;font-size:14px;letter-spacing:0.880px;">8278040001070111</span>
<div class="ln" style="left:41px;top:684px;width:328px"></div>
<svg class="i" style="left:350px;top:662.2px" width="14" height="14" viewBox="0 0 52 52"><path fill="#dddbda" d="M9.5 33.4l8.9 8.9c.4.4 1 .4 1.4 0L42 20c.4-.4.4-1 0-1.4l-8.8-8.8c-.4-.4-1-.4-1.4 0L9.5 32c-.4.4-.4 1 0 1.400zM36.100 5.700c-.4.4-.4 1 0 1.400l8.800 8.800c.4.4 1 .4 1.400 0l2.500-2.500c1.600-1.500 1.600-3.900 0-5.500l-4.700-4.700c-1.600-1.600-4.100-1.600-5.700 0l-2.300 2.500zM2.100 48.200c-.2 1 .7 1.900 1.700 1.700l10.900-2.600c.4-.1.700-.3.900-.5l.2-.2c.2-.2.300-.9-.1-1.300l-9-9c-.4-.4-1.100-.3-1.300-.1l-.2.200c-.3.300-.4.600-.5.900L2.100 48.200z"/></svg>
<span class="t" style="left:397.41px;top:452.00px;font-size:12px;color:#3e3e3c;letter-spacing:-0.026px;">Status</span>
<span class="t" style="left:397.41px;top:472.00px;font-size:14px;letter-spacing:0.147px;">Guided Review</span>
<div class="ln" style="left:393px;top:492px;width:329px"></div>
<svg class="i" style="left:702.8px;top:470.2px" width="14" height="14" viewBox="0 0 52 52"><path fill="#dddbda" d="M9.5 33.4l8.9 8.9c.4.4 1 .4 1.4 0L42 20c.4-.4.4-1 0-1.4l-8.8-8.8c-.4-.4-1-.4-1.4 0L9.5 32c-.4.4-.4 1 0 1.400zM36.100 5.700c-.4.4-.4 1 0 1.400l8.800 8.800c.4.4 1 .4 1.400 0l2.500-2.500c1.600-1.500 1.600-3.900 0-5.500l-4.700-4.700c-1.600-1.600-4.100-1.600-5.700 0l-2.300 2.500zM2.100 48.200c-.2 1 .7 1.900 1.700 1.700l10.900-2.600c.4-.1.700-.3.900-.5l.2-.2c.2-.2.300-.9-.1-1.300l-9-9c-.4-.4-1.100-.3-1.300-.1l-.2.200c-.3.300-.4.600-.5.900L2.100 48.200z"/></svg>
<span class="t" style="left:397.41px;top:500.00px;font-size:12px;color:#3e3e3c;letter-spacing:0.014px;">Date</span>
<span class="t" style="left:397.41px;top:520.00px;font-size:14px;letter-spacing:0.531px;">08-10-2018</span>
<div class="ln" style="left:393px;top:540px;width:329px"></div>
<svg class="i" style="left:702.8px;top:518.2px" width="14" height="14" viewBox="0 0 52 52"><path fill="#dddbda" d="M9.5 33.4l8.9 8.9c.4.4 1 .4 1.4 0L42 20c.4-.4.4-1 0-1.4l-8.8-8.8c-.4-.4-1-.4-1.4 0L9.5 32c-.4.4-.4 1 0 1.400zM36.100 5.700c-.4.4-.4 1 0 1.400l8.800 8.800c.4.4 1 .4 1.400 0l2.500-2.500c1.600-1.500 1.600-3.900 0-5.500l-4.700-4.700c-1.600-1.600-4.100-1.600-5.700 0l-2.300 2.500zM2.100 48.200c-.2 1 .7 1.900 1.700 1.700l10.900-2.600c.4-.1.700-.3.900-.5l.2-.2c.2-.2.300-.9-.1-1.300l-9-9c-.4-.4-1.100-.3-1.300-.1l-.2.200c-.3.300-.4.600-.5.900L2.100 48.200z"/></svg>
<span class="t" style="left:397.41px;top:548.00px;font-size:12px;color:#3e3e3c;letter-spacing:0.150px;">Report Date</span>
<span class="t" style="left:397.41px;top:568.00px;font-size:14px;letter-spacing:0.531px;">05-10-2018</span>
<div class="ln" style="left:393px;top:588px;width:329px"></div>
<svg class="i" style="left:702.8px;top:566.2px" width="14" height="14" viewBox="0 0 52 52"><path fill="#dddbda" d="M9.5 33.4l8.9 8.9c.4.4 1 .4 1.4 0L42 20c.4-.4.4-1 0-1.4l-8.8-8.8c-.4-.4-1-.4-1.4 0L9.5 32c-.4.4-.4 1 0 1.400zM36.100 5.700c-.4.4-.4 1 0 1.400l8.800 8.800c.4.4 1 .4 1.400 0l2.500-2.500c1.600-1.500 1.600-3.900 0-5.500l-4.700-4.700c-1.600-1.600-4.100-1.600-5.700 0l-2.300 2.500zM2.100 48.200c-.2 1 .7 1.900 1.700 1.700l10.900-2.600c.4-.1.700-.3.900-.5l.2-.2c.2-.2.300-.9-.1-1.300l-9-9c-.4-.4-1.100-.3-1.300-.1l-.2.200c-.3.300-.4.600-.5.900L2.100 48.200z"/></svg>
<span class="t" style="left:397.41px;top:596.00px;font-size:12px;color:#3e3e3c;letter-spacing:0.142px;">Post Office</span>
<span class="t" style="left:397.41px;top:616.00px;font-size:14px;letter-spacing:0.715px;">0001</span>
<div class="ln" style="left:393px;top:636px;width:329px"></div>
<svg class="i" style="left:702.8px;top:614.2px" width="14" height="14" viewBox="0 0 52 52"><path fill="#dddbda" d="M9.5 33.4l8.9 8.9c.4.4 1 .4 1.4 0L42 20c.4-.4.4-1 0-1.4l-8.8-8.8c-.4-.4-1-.4-1.4 0L9.5 32c-.4.4-.4 1 0 1.400zM36.100 5.700c-.4.4-.4 1 0 1.400l8.800 8.800c.4.4 1 .4 1.400 0l2.500-2.500c1.600-1.500 1.600-3.900 0-5.500l-4.700-4.700c-1.600-1.600-4.100-1.600-5.700 0l-2.300 2.500zM2.100 48.200c-.2 1 .7 1.900 1.700 1.700l10.900-2.600c.4-.1.700-.3.900-.5l.2-.2c.2-.2.300-.9-.1-1.300l-9-9c-.4-.4-1.100-.3-1.300-.1l-.2.200c-.3.300-.4.600-.5.900L2.100 48.200z"/></svg>
<svg class="i" style="left:100.800px;top:596px" width="12.400" height="12.400" viewBox="0 0 12.400 12.400"><circle cx="6.200" cy="6.200" r="6.200" fill="#b0adab"/><rect x="5.250" y="5.300" width="1.900" height="4.400" rx=".4" fill="#fff"/><circle cx="6.200" cy="3.400" r="1.100" fill="#fff"/></svg>
<div class="sec" style="top:694px"></div>
<svg class="i" style="left:40.1px;top:705.7px" width="13.9" height="8.4" viewBox="0 0 13.9 8.4"><path d="M.7 .7L6.95 7.7L13.2 .7" fill="none" stroke="#706e6b" stroke-width="1.6" stroke-linecap="round" stroke-linejoin="round"/></svg>
<span class="t" style="left:64.11px;top:702.00px;font-size:16px;letter-spacing:0.470px;">Related Information</span>
<span class="t" style="left:45.30px;top:742.21px;font-size:12px;color:#3e3e3c;letter-spacing:0.290px;">Contact</span>
<span class="t" style="left:397.41px;top:742.21px;font-size:12px;color:#3e3e3c;letter-spacing:0.537px;">Installment</span>
<div class="ln" style="left:41px;top:782px;width:328px"></div>
<div class="ln" style="left:393px;top:782px;width:329px"></div>
<svg class="i" style="left:350px;top:760px" width="14" height="14" viewBox="0 0 52 52"><path fill="#dddbda" d="M9.5 33.4l8.9 8.9c.4.4 1 .4 1.4 0L42 20c.4-.4.4-1 0-1.4l-8.8-8.8c-.4-.4-1-.4-1.4 0L9.5 32c-.4.4-.4 1 0 1.400zM36.100 5.700c-.4.4-.4 1 0 1.400l8.800 8.800c.4.4 1 .4 1.400 0l2.500-2.500c1.600-1.500 1.600-3.900 0-5.500l-4.700-4.700c-1.600-1.600-4.100-1.600-5.700 0l-2.300 2.500zM2.100 48.200c-.2 1 .7 1.900 1.700 1.700l10.900-2.600c.4-.1.700-.3.900-.5l.2-.2c.2-.2.300-.9-.1-1.300l-9-9c-.4-.4-1.100-.3-1.300-.1l-.2.200c-.3.300-.4.600-.5.900L2.100 48.200z"/></svg>
<svg class="i" style="left:702.8px;top:760px" width="14" height="14" viewBox="0 0 52 52"><path fill="#dddbda" d="M9.5 33.4l8.9 8.9c.4.4 1 .4 1.4 0L42 20c.4-.4.4-1 0-1.4l-8.8-8.8c-.4-.4-1-.4-1.4 0L9.5 32c-.4.4-.4 1 0 1.400zM36.100 5.700c-.4.4-.4 1 0 1.400l8.800 8.800c.4.4 1 .4 1.400 0l2.500-2.500c1.600-1.500 1.600-3.900 0-5.500l-4.700-4.700c-1.600-1.600-4.100-1.600-5.700 0l-2.300 2.500zM2.100 48.200c-.2 1 .7 1.900 1.700 1.700l10.900-2.600c.4-.1.700-.3.900-.5l.2-.2c.2-.2.300-.9-.1-1.300l-9-9c-.4-.4-1.100-.3-1.300-.1l-.2.200c-.3.300-.4.600-.5.900L2.100 48.200z"/></svg>
<div class="sec" style="top:792px"></div>
<svg class="i" style="left:40.1px;top:803.7px" width="13.9" height="8.4" viewBox="0 0 13.9 8.4"><path d="M.7 .7L6.95 7.7L13.2 .7" fill="none" stroke="#706e6b" stroke-width="1.6" stroke-linecap="round" stroke-linejoin="round"/></svg>
<span class="t" style="left:64.11px;top:800.00px;font-size:16px;letter-spacing:-0.347px;">Raw Message</span>
<div class="card" style="left:763px;top:136px;width:357px;height:505px"></div>
<div class="ico" style="left:780px;top:149px;width:24px;height:24px;background:#f09a4b"><svg width="24" height="24" viewBox="0 0 24 24"><g fill="#fff"><path d="M6.500 5.600h10.300l2 1.500-2 1.500H6.500c-.3 0-.5-.2-.5-.5v-2c0-.3.200-.5.500-.5z"/><path d="M17.500 10.700H7.100l-2.300 1.800 2.300 1.800h10.400c.3 0 .5-.2.5-.5v-2.600c0-.3-.2-.5-.5-.5z"/><rect x="11.400" y="4.600" width="1.100" height="7" opacity=".9"/><rect x="11.400" y="14.300" width="1.100" height="2" opacity=".35"/><path d="M11.900 16l3.100 3.300H8.800z"/></g></svg></div>
<span class="t" style="left:815.80px;top:153.11px;font-size:16px;letter-spacing:0.220px;">Guided Matching Progress</span>
<span class="t" style="left:831.80px;top:188.00px;font-size:13px;letter-spacing:0.186px;">Set to Credit</span>
<span class="t" style="left:832.11px;top:206.61px;font-size:17.5px;color:#706e6b;font-family:"DejaVu Sans",sans-serif;">↪</span>
<span class="t" style="left:850.41px;top:207.00px;font-size:13px;font-style:italic;letter-spacing:0.037px;">Debit Credit Type = Credit</span>
<span class="t" style="left:831.80px;top:226.00px;font-size:13px;letter-spacing:0.344px;">Extract Quarto Campo / Codeline</span>
<span class="t" style="left:832.11px;top:244.61px;font-size:17.5px;color:#706e6b;font-family:"DejaVu Sans",sans-serif;">↪</span>
<span class="t" style="left:850.41px;top:245.00px;font-size:13px;font-style:italic;letter-spacing:0.048px;">Payment</span>
<span class="t" style="left:832.21px;top:264.00px;font-size:13px;font-style:italic;letter-spacing:-0.373px;">Reference</span>
<span class="t" style="left:893.61px;top:264.00px;font-size:13px;font-style:italic;">=</span>
<span class="t" style="left:904.80px;top:264.00px;font-size:13px;font-style:italic;letter-spacing:0.810px;">8278040001070111</span>
<span class="t" style="left:831.80px;top:283.00px;font-size:13px;letter-spacing:0.486px;">Extract Importo Documento</span>
<span class="t" style="left:832.11px;top:301.61px;font-size:17.5px;color:#706e6b;font-family:"DejaVu Sans",sans-serif;">↪</span>
<span class="t" style="left:850.41px;top:302.00px;font-size:13px;font-style:italic;letter-spacing:0.373px;">Amount = 30.0</span>
<span class="t" style="left:831.80px;top:321.00px;font-size:13px;letter-spacing:0.182px;">Extract Data Postal Libramento</span>
<span class="t" style="left:832.11px;top:339.61px;font-size:17.5px;color:#706e6b;font-family:"DejaVu Sans",sans-serif;">↪</span>
<span class="t" style="left:850.41px;top:340.00px;font-size:13px;font-style:italic;letter-spacing:0.289px;">Date = 08-10-2018</span>
<span class="t" style="left:831.80px;top:359.00px;font-size:13px;letter-spacing:0.161px;">Extract Data Operazione</span>
<span class="t" style="left:832.11px;top:377.61px;font-size:17.5px;color:#706e6b;font-family:"DejaVu Sans",sans-serif;">↪</span>
<span class="t" style="left:850.41px;top:378.00px;font-size:13px;font-style:italic;letter-spacing:0.213px;">Report Date = 05-10-2018</span>
<span class="t" style="left:831.80px;top:397.00px;font-size:13px;letter-spacing:0.222px;">Extract Codice Ufficio</span>
<span class="t" style="left:832.11px;top:415.61px;font-size:17.5px;color:#706e6b;font-family:"DejaVu Sans",sans-serif;">↪</span>
<span class="t" style="left:850.41px;top:416.00px;font-size:13px;font-style:italic;letter-spacing:0.104px;">Post Office = 0001</span>
<span class="t" style="left:831.80px;top:435.00px;font-size:13px;letter-spacing:0.276px;">Find Installment by Generated Payment</span>
<span class="t" style="left:831.80px;top:454.00px;font-size:13px;letter-spacing:-0.061px;">Reference</span>
<span class="t" style="left:831.80px;top:473.00px;font-size:13px;letter-spacing:0.281px;">Find Installment by Custom Payment</span>
<span class="t" style="left:831.80px;top:492.00px;font-size:13px;letter-spacing:-0.061px;">Reference</span>
<span class="t" style="left:831.80px;top:511.00px;font-size:13px;letter-spacing:0.424px;">Get Contact from Installment</span>
<span class="t" style="left:831.80px;top:530.00px;font-size:13px;letter-spacing:0.230px;">Ask for Contact</span>
<span class="t" style="left:831.80px;top:549.00px;font-size:13px;letter-spacing:0.347px;">Create Installment</span>
<span class="t" style="left:831.80px;top:568.00px;font-size:13px;letter-spacing:0.215px;">Process Installment</span>
<svg class="i" style="left:783.500px;top:190px" width="17" height="12" viewBox="0 0 17 12"><path d="M1.700 6.200L6.600 10.500L14.900 1.800" fill="none" stroke="#706e6b" stroke-width="1.900" stroke-linecap="round" stroke-linejoin="round"/></svg>
<div class="ico" style="left:808px;top:188.2px;width:16px;height:16px;background:#66a6cd;border-radius:3.5px"><svg width="16" height="16" viewBox="0 0 16 16"><g stroke="#fff" stroke-width="1.200" stroke-linecap="round" fill="none"><path d="M7 3.700L5.300 12.500M10.700 3.700L9 12.500M4 6.500H12.500M3.500 9.700H12"/></g></svg></div>
<svg class="i" style="left:783.500px;top:228.2px" width="17" height="12" viewBox="0 0 17 12"><path d="M1.700 6.200L6.600 10.500L14.900 1.800" fill="none" stroke="#706e6b" stroke-width="1.900" stroke-linecap="round" stroke-linejoin="round"/></svg>
<div class="ico" style="left:808px;top:226.2px;width:16px;height:16px;background:#969492;border-radius:3.5px"><svg width="16" height="16" viewBox="0 0 16 16"><rect x="3.1" y="3.3" width="9.6" height="9.6" rx="1.2" fill="#fff"/><g stroke="#969492" stroke-width="1" fill="none"><path d="M4.900 5.700H11.100M4.900 8.100H11.100M4.900 10.500H9.600"/></g></svg></div>
<svg class="i" style="left:783.500px;top:285.2px" width="17" height="12" viewBox="0 0 17 12"><path d="M1.700 6.200L6.600 10.500L14.900 1.800" fill="none" stroke="#706e6b" stroke-width="1.900" stroke-linecap="round" stroke-linejoin="round"/></svg>
<div class="ico" style="left:808px;top:283.2px;width:16px;height:16px;background:#969492;border-radius:3.5px"><svg width="16" height="16" viewBox="0 0 16 16"><rect x="3.1" y="3.3" width="9.6" height="9.6" rx="1.2" fill="#fff"/><g stroke="#969492" stroke-width="1" fill="none"><path d="M4.900 5.700H11.100M4.900 8.100H11.100M4.900 10.500H9.600"/></g></svg></div>
<svg class="i" style="left:783.500px;top:323.2px" width="17" height="12" viewBox="0 0 17 12"><path d="M1.700 6.200L6.600 10.500L14.900 1.800" fill="none" stroke="#706e6b" stroke-width="1.900" stroke-linecap="round" stroke-linejoin="round"/></svg>
<div class="ico" style="left:808px;top:321.2px;width:16px;height:16px;background:#969492;border-radius:3.5px"><svg width="16" height="16" viewBox="0 0 16 16"><rect x="3.1" y="3.3" width="9.6" height="9.6" rx="1.2" fill="#fff"/><g stroke="#969492" stroke-width="1" fill="none"><path d="M4.900 5.700H11.100M4.900 8.100H11.100M4.900 10.500H9.600"/></g></svg></div>
<svg class="i" style="left:783.500px;top:361.2px" width="17" height="12" viewBox="0 0 17 12"><path d="M1.700 6.200L6.600 10.500L14.900 1.800" fill="none" stroke="#706e6b" stroke-width="1.900" stroke-linecap="round" stroke-linejoin="round"/></svg>
<div class="ico" style="left:808px;top:359.2px;width:16px;height:16px;background:#969492;border-radius:3.5px"><svg width="16" height="16" viewBox="0 0 16 16"><rect x="3.1" y="3.3" width="9.6" height="9.6" rx="1.2" fill="#fff"/><g stroke="#969492" stroke-width="1" fill="none"><path d="M4.900 5.700H11.100M4.900 8.100H11.100M4.900 10.500H9.600"/></g></svg></div>
<svg class="i" style="left:783.500px;top:399.2px" width="17" height="12" viewBox="0 0 17 12"><path d="M1.700 6.200L6.600 10.500L14.900 1.800" fill="none" stroke="#706e6b" stroke-width="1.900" stroke-linecap="round" stroke-linejoin="round"/></svg>
<div class="ico" style="left:808px;top:397.2px;width:16px;height:16px;background:#969492;border-radius:3.5px"><svg width="16" height="16" viewBox="0 0 16 16"><rect x="3.1" y="3.3" width="9.6" height="9.6" rx="1.2" fill="#fff"/><g stroke="#969492" stroke-width="1" fill="none"><path d="M4.900 5.700H11.100M4.900 8.100H11.100M4.900 10.500H9.600"/></g></svg></div>
<svg class="i" style="left:784px;top:444px" width="16" height="16" viewBox="0 0 16 16"><circle cx="8" cy="8" r="6.500" fill="none" stroke="#706e6b" stroke-width="1.600"/></svg>
<div class="ico" style="left:808px;top:444px;width:16px;height:16px;background:#e8825f;border-radius:3.5px"><svg width="16" height="16" viewBox="0 0 16 16"><g fill="#fff"><ellipse cx="8" cy="4.700" rx="3.900" ry="1.500"/><path d="M4.100 6.100c.7.800 2.200 1.200 3.900 1.200s3.200-.4 3.900-1.200v1.500c-.7.800-2.200 1.200-3.900 1.200s-3.200-.4-3.900-1.200z"/><path d="M4.100 8.500c.7.800 2.200 1.200 3.900 1.200s3.200-.4 3.900-1.200v1.500c-.7.800-2.200 1.200-3.900 1.200s-3.200-.4-3.900-1.200z"/><path d="M4.100 10.900c.7.800 2.200 1.200 3.900 1.200s3.200-.4 3.900-1.200v.8c0 .9-1.700 1.600-3.900 1.600s-3.900-.7-3.900-1.600z"/></g></svg></div>
<svg class="i" style="left:784px;top:482px" width="16" height="16" viewBox="0 0 16 16"><circle cx="8" cy="8" r="6.500" fill="none" stroke="#706e6b" stroke-width="1.600"/></svg>
<div class="ico" style="left:808px;top:482px;width:16px;height:16px;background:#e8825f;border-radius:3.5px"><svg width="16" height="16" viewBox="0 0 16 16"><g fill="#fff"><ellipse cx="8" cy="4.700" rx="3.900" ry="1.500"/><path d="M4.100 6.100c.7.800 2.200 1.200 3.900 1.200s3.200-.4 3.900-1.200v1.500c-.7.800-2.200 1.200-3.900 1.200s-3.200-.4-3.900-1.200z"/><path d="M4.100 8.500c.7.800 2.200 1.200 3.900 1.200s3.200-.4 3.900-1.200v1.500c-.7.800-2.200 1.200-3.900 1.200s-3.200-.4-3.900-1.200z"/><path d="M4.100 10.900c.7.800 2.200 1.200 3.900 1.200s3.200-.4 3.900-1.200v.8c0 .9-1.700 1.600-3.900 1.600s-3.900-.7-3.900-1.600z"/></g></svg></div>
<svg class="i" style="left:783px;top:512px" width="18" height="15" viewBox="0 0 18 15"><path d="M2.300 10.500V7A4.800 4.800 0 0 1 11.900 7V12" fill="none" stroke="#706e6b" stroke-width="1.900" stroke-linecap="round"/><path d="M7.800 8.600L11.900 12.700L16 8.600" fill="none" stroke="#706e6b" stroke-width="1.900" stroke-linecap="round" stroke-linejoin="round"/></svg>
<div class="ico" style="left:808px;top:511.2px;width:16px;height:16px;background:#e8825f;border-radius:3.5px"><svg width="16" height="16" viewBox="0 0 16 16"><g fill="#fff"><ellipse cx="8" cy="4.700" rx="3.900" ry="1.500"/><path d="M4.100 6.100c.7.800 2.200 1.200 3.900 1.200s3.200-.4 3.900-1.200v1.500c-.7.800-2.200 1.200-3.900 1.200s-3.200-.4-3.900-1.200z"/><path d="M4.100 8.500c.7.800 2.200 1.200 3.900 1.200s3.200-.4 3.900-1.200v1.500c-.7.800-2.200 1.200-3.900 1.200s-3.200-.4-3.900-1.200z"/><path d="M4.100 10.900c.7.800 2.200 1.200 3.900 1.200s3.200-.4 3.900-1.200v.8c0 .9-1.700 1.600-3.900 1.600s-3.900-.7-3.900-1.600z"/></g></svg></div>
<svg class="i" style="left:784px;top:530.500px" width="16" height="15" viewBox="0 0 16 15"><g fill="#706e6b"><circle cx="7.900" cy="4.100" r="3.800"/><path d="M.4 13.300c0-2.600 2-4.200 4.300-4.800.9.700 2 1.100 3.200 1.100s2.300-.4 3.200-1.100c2.300.6 4.300 2.200 4.300 4.800 0 .9-.6 1.500-1.500 1.500H1.900c-.9 0-1.500-.6-1.500-1.500z"/></g></svg>
<div class="ico" style="left:808px;top:530.2px;width:16px;height:16px;background:#5ebbcd;border-radius:3.5px"><svg width="16" height="16" viewBox="0 0 16 16"><g fill="#fff"><circle cx="8" cy="5.700" r="2.500"/><path d="M3.300 12.500c0-1.700 1.300-2.800 2.800-3.200.5.500 1.200.8 1.900.8s1.400-.3 1.900-.8c1.500.4 2.800 1.500 2.800 3.200 0 .3-.2.500-.5.500H3.800c-.3 0-.5-.2-.5-.5z"/></g></svg></div>
<div class="ico" style="left:808px;top:549.2px;width:16px;height:16px;background:#df6f92;border-radius:3.5px"><svg width="16" height="16" viewBox="0 0 16 16"><g fill="#fff"><path d="M3.400 4.600h9.200v7.800c0 .5-.4.900-.9.900H4.300c-.5 0-.9-.4-.9-.9z"/><rect x="5.800" y="2.900" width="4.400" height="2.300" rx=".6"/></g><g stroke="#df6f92" stroke-width="1" fill="none"><path d="M8 7.400v3.600M6.200 9.200h3.600M3.400 6.100h9.200" /></g></svg></div>
<div class="ico" style="left:808px;top:568.2px;width:16px;height:16px;background:#4cad85;border-radius:3.5px"><svg width="16" height="16" viewBox="0 0 16 16"><g fill="#fff"><rect x="3.600" y="6.100" width="8.800" height="4.300" rx=".5"/><circle cx="8" cy="4" r=".7"/><circle cx="3.700" cy="12.400" r=".7"/><circle cx="12.300" cy="12.400" r=".7"/></g><circle cx="8" cy="8.250" r="1.250" fill="#4cad85"/><g stroke="#fff" stroke-width=".7"><path d="M8 4.500v1.600M4.100 12l1.400-1.600M11.900 12l-1.400-1.600"/></g></svg></div>
<div class="btn" style="left:900px;top:596px;width:83px;height:32px"></div>
<span class="t ns" style="left:916.91px;top:604.91px;font-size:13px;color:#1b5297;letter-spacing:0.062px;">Retry All</span>
<div class="card" style="left:763px;top:653px;width:357px;height:200px;overflow:hidden"><div class="abs" style="left:0;top:0;width:355px;height:65px;background:#f3f2f2;border-bottom:1px solid #dddbda"></div></div>
<div class="ico" style="left:780px;top:674px;width:24px;height:24px;background:#b9ac92"><svg width="24" height="24" viewBox="0 0 24 24"><g fill="#fff"><path d="M9.300 5h5.100v3.100c0 .4.300.7.700.7h3v7.100c0 .5-.4.900-.9.900H9.300c-.5 0-.9-.4-.9-.9V5.900c0-.500.4-.9.900-.9z"/><path d="M15.300 5.100l2.700 2.800h-2.700z"/><path d="M6.200 7.200h.9v9.600c0 .8.600 1.400 1.400 1.400h6.900v.8c0 .5-.4.900-.9.900H6.200c-.5 0-.9-.4-.9-.9V8.100c0-.5.400-.9.900-.9z"/></g></svg></div>
<span class="t" style="left:815.80px;top:678.41px;font-size:16px;font-weight:700;letter-spacing:-0.121px;">Files (2)</span>
<div class="btn" style="left:1083px;top:671px;width:20px;height:20px"></div>
<svg class="i" style="left:1087.9px;top:678.7px" width="10.2" height="6.3" viewBox="0 0 10.2 6.3"><path d="M0 0H10.2L5.1 6.3Z" fill="#706e6b"/></svg>
<svg class="i" style="left:782px;top:728px" width="28" height="32" viewBox="0 0 28 32"><path d="M2 0H18L28 10V30a2 2 0 0 1-2 2H2a2 2 0 0 1-2-2V2a2 2 0 0 1 2-2z" fill="#8199af"/><path d="M18 0L28 10H20a2 2 0 0 1-2-2z" fill="#c5d0dc"/></svg>
<span class="t ns" style="left:818.30px;top:725.91px;font-size:13px;color:#006dcc;letter-spacing:0.328px;">BR_7_BA70029800020181006K000015FA....</span>
<span class="t" style="left:818.30px;top:744.80px;font-size:12px;color:#3e3e3c;letter-spacing:0.390px;">11 Mar 2020</span>
<span class="t" style="left:895.21px;top:746.61px;font-size:8px;color:#3e3e3c;">•</span>
<span class="t" style="left:904.61px;top:744.80px;font-size:12px;color:#3e3e3c;letter-spacing:-0.083px;">982KB</span>
<span class="t" style="left:946.61px;top:746.61px;font-size:8px;color:#3e3e3c;">•</span>
<span class="t" style="left:955.41px;top:744.80px;font-size:12px;color:#3e3e3c;letter-spacing:0.428px;">tif</span>
<svg class="i" style="left:780px;top:784.500px" width="30" height="20" viewBox="0 0 30 20"><rect width="30" height="20" fill="#fff"/><rect x=".9" y="5.400" width="28.300" height="3.100" fill="#f3f3f3" stroke="#dcdcdc" stroke-width=".4"/><rect x=".3" y="8.900" width="9.600" height="6" fill="#fff" stroke="#dedede" stroke-width=".4"/><rect x="27.300" y="5.400" width="1.900" height="10" fill="#f1f1f1"/><g stroke="#9b9b9b" stroke-width=".5" fill="none"><path d="M0 .700H10.800M25.800 .700H29M5.800 2H9.500M18 2H19.800M25 1.900H28M1.400 3.300H3.800M5 3.300H9M10.500 2.800H15.400M1.600 4.500H4.600M6 4.500H9.300M10.600 4.500H13.600M15.700 4.500H17.400M19.200 4.500H27"/><path d="M10.400 9.300H14M10.400 10.100H23.300M10.400 13.500H15.300M16.500 13.700H19M27 17.300H28.600" stroke="#a8a8a8"/><path d="M0 15.300H29" stroke="#cfcfcf"/></g><rect x=".9" y="1" width="1.500" height="1.700" fill="#3a3a3a"/><rect x="1.500" y="6.200" width="1.200" height=".9" fill="#8a8a8a"/><g fill="none"><path d="M5 7.300H17.600" stroke="#7d7d7d" stroke-width=".6"/><path d="M10.700 12H24.600" stroke="#565656" stroke-width=".9"/><path d="M2.800 15.300H6.500M17.800 15.300H21M22.800 15.300H25M26 15.300H28.500" stroke="#6a6a6a" stroke-width=".6"/></g></svg>
<span class="t ns" style="left:818.30px;top:775.50px;font-size:13px;color:#006dcc;letter-spacing:0.328px;">BR_7_BA70029800020181006K000015FA....</span>
<span class="t" style="left:818.30px;top:794.50px;font-size:12px;color:#3e3e3c;letter-spacing:0.390px;">11 Mar 2020</span>
<span class="t" style="left:895.21px;top:796.30px;font-size:8px;color:#3e3e3c;">•</span>
<span class="t" style="left:904.61px;top:794.50px;font-size:12px;color:#3e3e3c;letter-spacing:-0.353px;">30KB</span>
<span class="t" style="left:938.80px;top:796.30px;font-size:8px;color:#3e3e3c;">•</span>
<span class="t" style="left:948.30px;top:794.50px;font-size:12px;color:#3e3e3c;letter-spacing:0.334px;">png</span>
<div class="ln" style="left:764px;top:819px;width:355px"></div>
</div>
</body>
</html>
